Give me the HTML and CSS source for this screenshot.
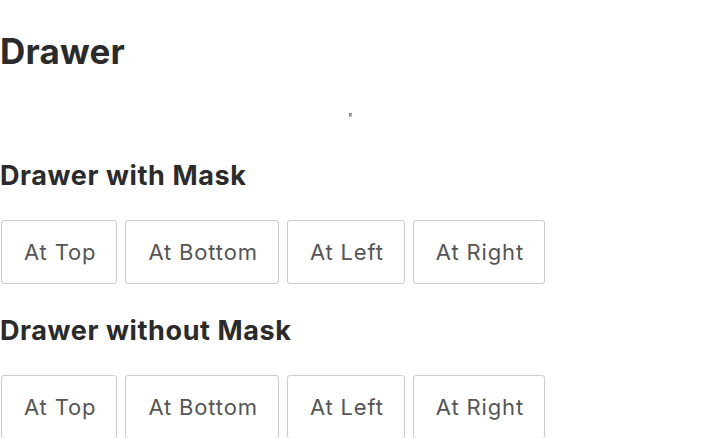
FILE: index.html
```html
<!DOCTYPE html>
<html>
<head>
<meta charset="utf-8">
<link rel="stylesheet" href="styles.css">
</head>
<body>
<div class="page">
  <h1 class="title">Drawer</h1>
  <div class="drawer-stub"></div>
  <section class="demo demo-first">
    <h2 class="demo-title">Drawer with Mask</h2>
    <div class="btn-row">
      <button class="btn">At Top</button>
      <button class="btn">At Bottom</button>
      <button class="btn">At Left</button>
      <button class="btn">At Right</button>
    </div>
  </section>
  <section class="demo">
    <h2 class="demo-title">Drawer without Mask</h2>
    <div class="btn-row">
      <button class="btn">At Top</button>
      <button class="btn">At Bottom</button>
      <button class="btn">At Left</button>
      <button class="btn">At Right</button>
    </div>
  </section>
</div>
</body>
</html>
```
FILE: styles.css
```css
html, body {
  margin: 0;
  padding: 0;
  background: #ffffff;
}
body {
  font-family: Inter, "Liberation Sans", sans-serif;
  color: #2b2b2b;
}
.page {
  position: relative;
  padding-top: 30px;
}
.title {
  margin: 0;
  font-size: 35px;
  line-height: 42px;
  font-weight: 700;
  letter-spacing: 0.2px;
}
.drawer-stub {
  position: absolute;
  left: 349px;
  top: 113px;
  width: 3px;
  height: 4px;
  background: linear-gradient(135deg, #777 0%, #999 50%, #e6e6e6 100%);
}
.demo-first {
  margin-top: 88px;
}
.demo {
  margin-bottom: 31px;
}
.demo-title {
  margin: 0 0 28px 0;
  font-size: 27px;
  line-height: 32px;
  font-weight: 700;
  letter-spacing: 0.6px;
}
.btn-row {
  display: flex;
  gap: 8px;
  padding-left: 1px;
}
.btn {
  font-family: Inter, "Liberation Sans", sans-serif;
  font-size: 22px;
  line-height: 27px;
  letter-spacing: 0.85px;
  color: #555555;
  background: #ffffff;
  border: 1.5px solid #cdcdcd;
  border-radius: 3px;
  padding: 17.5px 20px 17.5px 22px;
  margin: 0;
}
```
